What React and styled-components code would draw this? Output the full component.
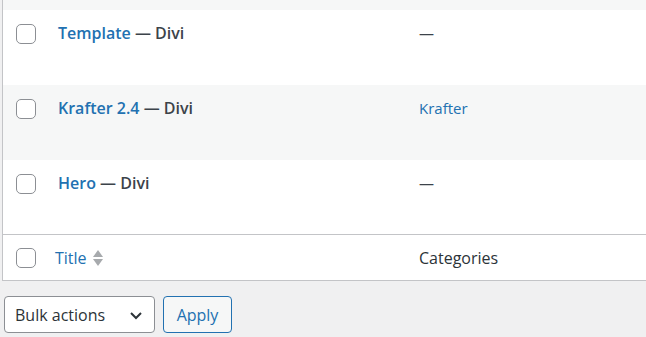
import styled, { createGlobalStyle } from "styled-components";

const GlobalStyle = createGlobalStyle`
	html, body {
		margin: 0;
		padding: 0;
		background: #f0f0f1;
		overflow: hidden;
	}
	body {
		font-family: "Open Sans", "Noto Sans", Arial, sans-serif;
		color: #3c434a;
	}
`;

const rows = [
	{ title: "Template", category: null, striped: false, height: 75 },
	{ title: "Krafter 2.4", category: "Krafter", striped: true, height: 75 },
	{ title: "Hero", category: null, striped: false, height: 74 },
];

const App = () => {
	return (
		<>
			<GlobalStyle />
			<Page>
				<Table>
					<TopStripe />
					{rows.map((row) => (
						<Row key={row.title} $striped={row.striped} $height={row.height}>
							<CheckCell>
								<Checkbox />
							</CheckCell>
							<TitleCell>
								<TitleLink>{row.title}</TitleLink>
								<State> — Divi</State>
							</TitleCell>
							<CategoryCell>
								{row.category ? <CategoryLink>{row.category}</CategoryLink> : "—"}
							</CategoryCell>
						</Row>
					))}
					<FooterRow>
						<CheckCell $foot>
							<Checkbox />
						</CheckCell>
						<FootTitle>
							<SortLink>Title</SortLink>
							<SortIcon viewBox="0 0 10 20" width="10" height="20">
								<path d="M5 2 L10 9 L0 9 Z" fill="#a7aaad" />
								<path d="M0 11 L10 11 L5 18 Z" fill="#a7aaad" />
							</SortIcon>
						</FootTitle>
						<FootCategory>Categories</FootCategory>
					</FooterRow>
				</Table>
				<Actions>
					<Select>
						<span>Bulk actions</span>
						<svg viewBox="0 0 14 14" width="14" height="14">
							<path d="M2 5 L7 10 L12 5" fill="none" stroke="#2c3338" strokeWidth="2" />
						</svg>
					</Select>
					<ApplyButton>Apply</ApplyButton>
				</Actions>
			</Page>
		</>
	);
};

export default App;

const Page = styled.div`
	width: 646px;
	height: 337px;
	overflow: hidden;
`;

const Table = styled.div`
	margin-left: 2px;
	width: 680px;
	background: #fff;
	border-left: 1px solid #c3c4c7;
	border-bottom: 1px solid #c3c4c7;
`;

const TopStripe = styled.div`
	height: 10px;
	background: #f6f7f7;
`;

const Row = styled.div`
	display: grid;
	grid-template-columns: 42px 361px 1fr;
	height: ${(p) => p.$height}px;
	background: ${(p) => (p.$striped ? "#f6f7f7" : "#fff")};
`;

const CheckCell = styled.div`
	padding: ${(p) => (p.$foot ? "13px 0 0 13px" : "14px 0 0 13px")};
`;

const Checkbox = styled.div`
	width: 18px;
	height: 18px;
	border: 1px solid #8c8f94;
	border-radius: 5px;
	background: #fff;
`;

const TitleCell = styled.div`
	padding: 11px 13px 0;
	font-size: 16px;
	line-height: 24px;
	font-weight: 600;
	white-space: nowrap;
`;

const TitleLink = styled.span`
	color: #2271b1;
`;

const State = styled.span`
	color: #3c434a;
`;

const CategoryCell = styled.div`
	padding: 11px 13px 0;
	font-size: 15px;
	line-height: 24px;
	color: #3c434a;
`;

const CategoryLink = styled.span`
	color: #2271b1;
`;

const FooterRow = styled.div`
	display: grid;
	grid-template-columns: 42px 361px 1fr;
	box-sizing: border-box;
	height: 46px;
	border-top: 1px solid #c3c4c7;
`;

const FootTitle = styled.div`
	display: flex;
	align-items: center;
	gap: 6px;
	padding-left: 10px;
	font-size: 16px;
`;

const SortLink = styled.span`
	color: #2271b1;
`;

const SortIcon = styled.svg`
	display: block;
`;

const FootCategory = styled.div`
	display: flex;
	align-items: center;
	padding-left: 13px;
	font-size: 16px;
	color: #2c3338;
`;

const Actions = styled.div`
	display: flex;
	gap: 8px;
	padding: 15px 0 0 4px;
`;

const Select = styled.div`
	box-sizing: border-box;
	width: 151px;
	height: 37px;
	display: flex;
	align-items: center;
	justify-content: space-between;
	padding: 0 11px 0 10px;
	background: #fff;
	border: 1px solid #8c8f94;
	border-radius: 4px;
	font-size: 16px;
	color: #2c3338;
`;

const ApplyButton = styled.button`
	box-sizing: border-box;
	height: 37px;
	width: 69px;
	background: #f6f7f7;
	border: 1px solid #2271b1;
	border-radius: 4px;
	color: #2271b1;
	font-family: inherit;
	font-size: 16px;
	padding: 0;
	cursor: pointer;
`;
